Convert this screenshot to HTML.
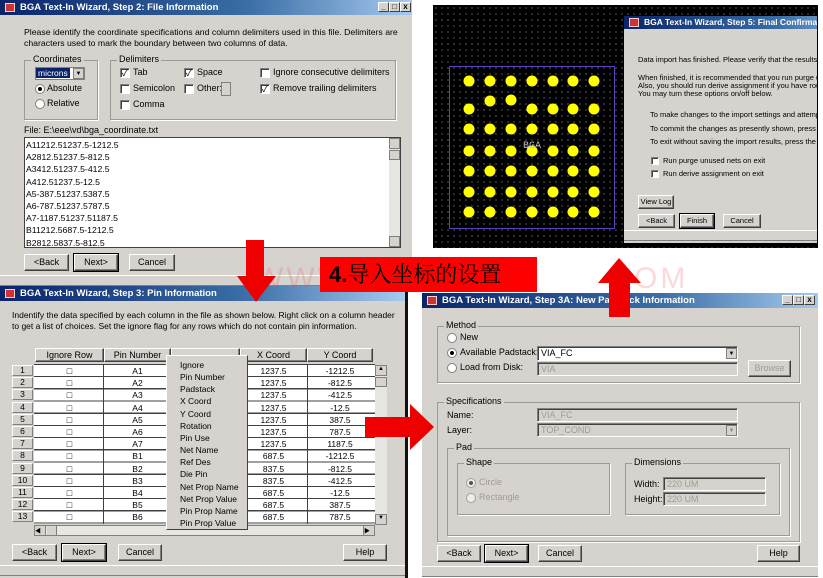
<!DOCTYPE html>
<html><head><meta charset="utf-8">
<style>
*{margin:0;padding:0;box-sizing:border-box}
body{width:823px;height:578px;position:relative;overflow:hidden;background:#fff;font-family:"Liberation Sans","Noto Sans CJK SC",sans-serif;font-size:9px;color:#000}
.a{position:absolute}
.dlg{position:absolute;background:#d6d3ce}
.tb{position:absolute;left:0;right:0;top:0;height:15px;background:linear-gradient(90deg,#0a246a,#3a6ea5 60%,#a6caf0);color:#fff;font-weight:bold;font-size:9.5px;line-height:15px;padding-left:20px;white-space:nowrap;overflow:hidden}
.tb i{position:absolute;left:5px;top:3px;width:10px;height:9px;background:#c33;border:1px solid #fcc}
.wb{position:absolute;top:2px;width:11px;height:10px;background:#d6d3ce;border:1px solid;border-color:#fff #404040 #404040 #fff;font-size:8px;color:#000;line-height:8px;text-align:center;font-weight:bold}
.btn{position:absolute;height:17px;background:#d6d3ce;border:1px solid;border-color:#fff #404040 #404040 #fff;box-shadow:inset -1px -1px #808080;text-align:center;line-height:15px;font-size:9px}
.btn.d{outline:1px solid #000}
.grp{position:absolute;border:1px solid #9c9a94;box-shadow:1px 1px #fff}
.grp>b{position:absolute;top:-7px;left:6px;background:#d6d3ce;font-weight:normal;padding:0 2px;font-size:9px}
.cb{position:absolute;width:10px;height:10px;background:#fff;border:1px solid;border-color:#808080 #fff #fff #808080;box-shadow:inset 1px 1px #404040;font-size:9px;line-height:8px;text-align:center}
.rd{position:absolute;width:10px;height:10px;border-radius:50%;background:#fff;border:1px solid #808080}
.rd.on::after{content:"";position:absolute;left:2px;top:2px;width:4px;height:4px;border-radius:50%;background:#000}
.fld{position:absolute;height:14px;border:1px solid;border-color:#808080 #fff #fff #808080;box-shadow:inset 1px 1px #404040;padding-left:3px;line-height:12px;font-size:9px;color:#a09c94;background:#d6d3ce}
.sb{position:absolute;height:11px;border-top:1px solid #fff;border-bottom:1px solid #808080}
.tbl div{position:absolute;text-align:center;height:12px;line-height:12px;font-size:9px}
</style></head><body>

<!-- Top-left dialog -->
<div class="dlg" style="left:0;top:0;width:412px;height:286px">
 <div class="tb"><i></i>BGA Text-In Wizard, Step 2: File Information</div>
 <div class="wb" style="left:378px">_</div><div class="wb" style="left:389px">□</div><div class="wb" style="left:400px">x</div>
 <div class="a" style="left:24px;top:27px;width:385px;line-height:11px;font-size:8.7px">Please identify the coordinate specifications and column delimiters used in this file. Delimiters are characters used to mark the boundary between two columns of data.</div>
 <div class="grp" style="left:24px;top:60px;width:74px;height:60px"><b>Coordinates</b></div>
 <div class="a" style="left:35px;top:67px;width:50px;height:13px;background:#fff;border:1px solid #808080"><span style="background:#0a246a;color:#fff;padding:0 2px;font-size:8.5px">microns</span></div>
 <div class="a" style="left:73px;top:68px;width:11px;height:11px;background:#d6d3ce;border:1px solid #808080;font-size:6px;text-align:center;line-height:10px">▼</div>
 <div class="rd on" style="left:35px;top:84px"></div><div class="a" style="left:47px;top:83px">Absolute</div>
 <div class="rd" style="left:35px;top:99px"></div><div class="a" style="left:47px;top:98px">Relative</div>
 <div class="grp" style="left:110px;top:60px;width:286px;height:60px"><b>Delimiters</b></div>
 <div class="cb" style="left:120px;top:68px">✓</div><div class="a" style="left:133px;top:67px">Tab</div>
 <div class="cb" style="left:184px;top:68px">✓</div><div class="a" style="left:197px;top:67px">Space</div>
 <div class="cb" style="left:260px;top:68px"></div><div class="a" style="left:273px;top:67px">Ignore consecutive delimiters</div>
 <div class="cb" style="left:120px;top:84px"></div><div class="a" style="left:133px;top:83px">Semicolon</div>
 <div class="cb" style="left:184px;top:84px"></div><div class="a" style="left:197px;top:83px">Other:</div>
 <div class="a" style="left:221px;top:82px;width:10px;height:14px;border:1px solid #808080;background:#d6d3ce"></div>
 <div class="cb" style="left:260px;top:84px">✓</div><div class="a" style="left:273px;top:83px">Remove trailing delimiters</div>
 <div class="cb" style="left:120px;top:100px"></div><div class="a" style="left:133px;top:99px">Comma</div>
 <div class="a" style="left:24px;top:125px">File: E:\eee\vd\bga_coordinate.txt</div>
 <div class="a" style="left:24px;top:137px;width:377px;height:111px;background:#fff;border:1px solid #404040;padding:1px 0 0 1px;line-height:12.2px;font-size:8.7px;overflow:hidden">A11212.51237.5-1212.5<br>A2812.51237.5-812.5<br>A3412.51237.5-412.5<br>A412.51237.5-12.5<br>A5-387.51237.5387.5<br>A6-787.51237.5787.5<br>A7-1187.51237.51187.5<br>B11212.5687.5-1212.5<br>B2812.5837.5-812.5</div>
 <div class="a" style="left:389px;top:138px;width:11px;height:109px;background:#e8e6e2"><div class="a" style="top:0;width:11px;height:11px;background:#d6d3ce;border:1px solid #808080"></div><div class="a" style="top:12px;width:11px;height:10px;background:#d6d3ce;border:1px solid #808080"></div><div class="a" style="bottom:0;width:11px;height:11px;background:#d6d3ce;border:1px solid #808080"></div></div>
 <div class="btn" style="left:24px;top:254px;width:45px">&lt;Back</div>
 <div class="btn d" style="left:74px;top:254px;width:44px">Next&gt;</div>
 <div class="btn" style="left:129px;top:254px;width:46px">Cancel</div>
 <div class="sb" style="left:0;top:275px;width:412px"></div>
</div>

<!-- Top-right PCB -->
<div class="a" style="left:433px;top:5px;width:385px;height:243px;background-color:#000;background-image:radial-gradient(#666 0.6px,transparent 0.9px);background-size:6px 6px"></div>
<svg class="a" style="left:0;top:0" width="823" height="578">
 <rect x="449.5" y="66.5" width="165" height="162" fill="none" stroke="#6040c0" stroke-width="1"/>
 <g fill="#ffff00">
 <circle cx="469" cy="81" r="5.5"/><circle cx="490" cy="81" r="5.5"/><circle cx="511" cy="81" r="5.5"/><circle cx="532" cy="81" r="5.5"/><circle cx="553" cy="81" r="5.5"/><circle cx="573" cy="81" r="5.5"/><circle cx="594" cy="81" r="5.5"/>
 <circle cx="469" cy="109" r="5.5"/><circle cx="490" cy="101" r="5.5"/><circle cx="511" cy="100" r="5.5"/><circle cx="532" cy="109" r="5.5"/><circle cx="553" cy="109" r="5.5"/><circle cx="573" cy="109" r="5.5"/><circle cx="594" cy="109" r="5.5"/>
 <circle cx="469" cy="129" r="5.5"/><circle cx="490" cy="129" r="5.5"/><circle cx="511" cy="129" r="5.5"/><circle cx="532" cy="129" r="5.5"/><circle cx="553" cy="129" r="5.5"/><circle cx="573" cy="129" r="5.5"/><circle cx="594" cy="129" r="5.5"/>
 <circle cx="469" cy="151" r="5.5"/><circle cx="490" cy="151" r="5.5"/><circle cx="511" cy="151" r="5.5"/><circle cx="532" cy="151" r="5.5"/><circle cx="553" cy="151" r="5.5"/><circle cx="573" cy="151" r="5.5"/><circle cx="594" cy="151" r="5.5"/>
 <circle cx="469" cy="171" r="5.5"/><circle cx="490" cy="171" r="5.5"/><circle cx="511" cy="171" r="5.5"/><circle cx="532" cy="171" r="5.5"/><circle cx="553" cy="171" r="5.5"/><circle cx="573" cy="171" r="5.5"/><circle cx="594" cy="171" r="5.5"/>
 <circle cx="469" cy="192" r="5.5"/><circle cx="490" cy="192" r="5.5"/><circle cx="511" cy="192" r="5.5"/><circle cx="532" cy="192" r="5.5"/><circle cx="553" cy="192" r="5.5"/><circle cx="573" cy="192" r="5.5"/><circle cx="594" cy="192" r="5.5"/>
 <circle cx="469" cy="212" r="5.5"/><circle cx="490" cy="212" r="5.5"/><circle cx="511" cy="212" r="5.5"/><circle cx="532" cy="212" r="5.5"/><circle cx="553" cy="212" r="5.5"/><circle cx="573" cy="212" r="5.5"/><circle cx="594" cy="212" r="5.5"/>
 </g>
 <text x="523" y="148" fill="#bbb" font-size="10" font-family="Liberation Mono,monospace">BGA</text>
</svg>

<!-- Final confirmation dialog -->
<div class="dlg" style="left:624px;top:16px;width:193px;height:227px;overflow:hidden">
 <div class="tb" style="height:13px;line-height:13px;font-size:8.5px;width:260px"><i style="top:2px"></i>BGA Text-In Wizard, Step 5: Final Confirmation</div>
 <div class="a" style="left:14px;top:40px;white-space:nowrap;font-size:7.5px;line-height:8.5px">Data import has finished. Please verify that the results are correct</div>
 <div class="a" style="left:14px;top:58px;white-space:nowrap;font-size:7.5px;line-height:8px">When finished, it is recommended that you run purge unused net<br>Also, you should run derive assignment if you have routed pins to<br>You may turn these options on/off below.</div>
 <div class="a" style="left:26px;top:92px;white-space:nowrap;font-size:7.5px;line-height:13.5px">To make changes to the import settings and attempt another<br>To commit the changes as presently shown, press the Finish<br>To exit without saving the import results, press the Cancel bu</div>
 <div class="cb" style="left:27px;top:141px;width:8px;height:8px"></div><div class="a" style="left:39px;top:140px;font-size:7.5px">Run purge unused nets on exit</div>
 <div class="cb" style="left:27px;top:154px;width:8px;height:8px"></div><div class="a" style="left:39px;top:153px;font-size:7.5px">Run derive assignment on exit</div>
 <div class="btn" style="left:14px;top:179px;width:36px;height:14px;line-height:12px;font-size:7.5px">View Log</div>
 <div class="btn" style="left:14px;top:198px;width:37px;height:14px;line-height:12px;font-size:7.5px">&lt;Back</div>
 <div class="btn d" style="left:56px;top:198px;width:34px;height:14px;line-height:12px;font-size:7.5px">Finish</div>
 <div class="btn" style="left:99px;top:198px;width:38px;height:14px;line-height:12px;font-size:7.5px">Cancel</div>
 <div class="sb" style="left:0;top:214px;width:193px"></div>
</div>

<!-- Bottom-left dialog -->
<div class="dlg" style="left:0;top:286px;width:405px;height:292px">
 <div class="tb"><i></i>BGA Text-In Wizard, Step 3: Pin Information</div>
 <div class="a" style="left:12px;top:24px;width:390px;line-height:11px;font-size:8.5px">Indentify the data specified by each column in the file as shown below. Right click on a column header to get a list of choices. Set the ignore flag for any rows which do not contain pin information.</div>
</div>
<div class="a" style="left:405px;top:286px;width:3px;height:292px;background:#111"></div>
<div class="a tbl" style="left:0;top:0">
 <div class="btn" style="left:35px;top:348px;width:69px;height:14px;line-height:12px">Ignore Row</div>
 <div class="btn" style="left:104px;top:348px;width:67px;height:14px;line-height:12px">Pin Number</div>
 <div class="btn" style="left:171px;top:348px;width:69px;height:14px;line-height:12px"></div>
 <div class="btn" style="left:240px;top:348px;width:67px;height:14px;line-height:12px">X Coord</div>
 <div class="btn" style="left:307px;top:348px;width:66px;height:14px;line-height:12px">Y Coord</div>
</div>
<div class="a" style="left:34px;top:364px;width:341px;height:160px;background:#fff;border-top:1px solid #404040;background-image:repeating-linear-gradient(180deg,transparent 0 11px,#404040 11px 12.2px),linear-gradient(90deg,transparent 69px,#404040 69px 70px,transparent 70px 136px,#404040 136px 137px,transparent 137px 205px,#404040 205px 206px,transparent 206px 273px,#404040 273px 274px,transparent 274px)"></div>
<div class="a" style="left:0;top:365px;width:380px;font-size:8.5px;line-height:12.2px">
 <div class="a" style="left:12px;top:0;width:21px;text-align:center">
  <div style="background:#d6d3ce;border:1px solid;border-color:#fff #808080 #808080 #fff;height:11px;line-height:9px;margin-bottom:1.2px">1</div><div style="background:#d6d3ce;border:1px solid;border-color:#fff #808080 #808080 #fff;height:11px;line-height:9px;margin-bottom:1.2px">2</div><div style="background:#d6d3ce;border:1px solid;border-color:#fff #808080 #808080 #fff;height:11px;line-height:9px;margin-bottom:1.2px">3</div><div style="background:#d6d3ce;border:1px solid;border-color:#fff #808080 #808080 #fff;height:11px;line-height:9px;margin-bottom:1.2px">4</div><div style="background:#d6d3ce;border:1px solid;border-color:#fff #808080 #808080 #fff;height:11px;line-height:9px;margin-bottom:1.2px">5</div><div style="background:#d6d3ce;border:1px solid;border-color:#fff #808080 #808080 #fff;height:11px;line-height:9px;margin-bottom:1.2px">6</div><div style="background:#d6d3ce;border:1px solid;border-color:#fff #808080 #808080 #fff;height:11px;line-height:9px;margin-bottom:1.2px">7</div><div style="background:#d6d3ce;border:1px solid;border-color:#fff #808080 #808080 #fff;height:11px;line-height:9px;margin-bottom:1.2px">8</div><div style="background:#d6d3ce;border:1px solid;border-color:#fff #808080 #808080 #fff;height:11px;line-height:9px;margin-bottom:1.2px">9</div><div style="background:#d6d3ce;border:1px solid;border-color:#fff #808080 #808080 #fff;height:11px;line-height:9px;margin-bottom:1.2px">10</div><div style="background:#d6d3ce;border:1px solid;border-color:#fff #808080 #808080 #fff;height:11px;line-height:9px;margin-bottom:1.2px">11</div><div style="background:#d6d3ce;border:1px solid;border-color:#fff #808080 #808080 #fff;height:11px;line-height:9px;margin-bottom:1.2px">12</div><div style="background:#d6d3ce;border:1px solid;border-color:#fff #808080 #808080 #fff;height:11px;line-height:9px">13</div>
 </div>
 <div class="a" style="left:35px;top:0;width:69px;text-align:center;font-size:9px">□<br>□<br>□<br>□<br>□<br>□<br>□<br>□<br>□<br>□<br>□<br>□<br>□</div>
 <div class="a" style="left:104px;top:0;width:67px;text-align:center">A1<br>A2<br>A3<br>A4<br>A5<br>A6<br>A7<br>B1<br>B2<br>B3<br>B4<br>B5<br>B6</div>
 <div class="a" style="left:240px;top:0;width:67px;text-align:center">1237.5<br>1237.5<br>1237.5<br>1237.5<br>1237.5<br>1237.5<br>1237.5<br>687.5<br>837.5<br>837.5<br>687.5<br>687.5<br>687.5</div>
 <div class="a" style="left:307px;top:0;width:66px;text-align:center">-1212.5<br>-812.5<br>-412.5<br>-12.5<br>387.5<br>787.5<br>1187.5<br>-1212.5<br>-812.5<br>-412.5<br>-12.5<br>387.5<br>787.5</div>
</div>
<div class="a" style="left:375px;top:365px;width:12px;height:160px;background:#e8e6e2"><div class="a" style="top:0;width:12px;height:11px;background:#d6d3ce;border:1px solid #808080;font-size:6px;text-align:center">▲</div><div class="a" style="top:12px;width:12px;height:10px;background:#d6d3ce;border:1px solid #808080"></div><div class="a" style="bottom:0;width:12px;height:11px;background:#d6d3ce;border:1px solid #808080;font-size:6px;text-align:center">▼</div></div>
<div class="a" style="left:34px;top:525px;width:341px;height:11px;background:#e8e6e2;border:1px solid #808080"><div class="a" style="left:0;width:11px;height:9px;background:#d6d3ce;border-right:1px solid #808080;font-size:6px">◀</div><div class="a" style="left:12px;width:10px;height:9px;background:#d6d3ce;border-right:1px solid #808080"></div><div class="a" style="right:0;width:11px;height:9px;background:#d6d3ce;border-left:1px solid #808080;font-size:6px">▶</div></div>
<div class="a" style="left:166px;top:355px;width:82px;height:175px;background:#d6d3ce;border:1px solid;border-color:#fff #404040 #404040 #fff;padding:3px 0 0 13px;font-size:8.5px;line-height:12.15px">Ignore<br>Pin Number<br>Padstack<br>X Coord<br>Y Coord<br>Rotation<br>Pin Use<br>Net Name<br>Ref Des<br>Die Pin<br>Net Prop Name<br>Net Prop Value<br>Pin Prop Name<br>Pin Prop Value</div>
<div class="btn" style="left:12px;top:544px;width:45px">&lt;Back</div>
<div class="btn d" style="left:62px;top:544px;width:44px">Next&gt;</div>
<div class="btn" style="left:118px;top:544px;width:44px">Cancel</div>
<div class="btn" style="left:343px;top:544px;width:44px">Help</div>
<div class="sb" style="left:0;top:565px;width:405px"></div>

<!-- Bottom-right dialog -->
<div class="dlg" style="left:422px;top:293px;width:396px;height:284px">
 <div class="tb"><i></i>BGA Text-In Wizard, Step 3A: New Padstack Information</div>
 <div class="wb" style="left:360px">_</div><div class="wb" style="left:371px">□</div><div class="wb" style="left:382px">x</div>
 <div class="grp" style="left:15px;top:33px;width:363px;height:57px"><b>Method</b></div>
 <div class="rd" style="left:25px;top:40px"></div><div class="a" style="left:38px;top:39px">New</div>
 <div class="rd on" style="left:25px;top:55px"></div><div class="a" style="left:38px;top:54px">Available Padstack:</div>
 <div class="a" style="left:115px;top:53px;width:201px;height:15px;background:#fff;border:1px solid;border-color:#808080 #fff #fff #808080;box-shadow:inset 1px 1px #404040;padding-left:3px;line-height:13px">VIA_FC</div>
 <div class="a" style="left:304px;top:55px;width:11px;height:11px;background:#d6d3ce;border:1px solid #808080;font-size:6px;text-align:center;line-height:10px">▼</div>
 <div class="rd" style="left:25px;top:70px"></div><div class="a" style="left:38px;top:69px">Load from Disk:</div>
 <div class="fld" style="left:115px;top:69px;width:201px">VIA</div>
 <div class="btn" style="left:326px;top:67px;width:43px;color:#a09c94">Browse</div>
 <div class="grp" style="left:15px;top:109px;width:363px;height:140px"><b>Specifications</b></div>
 <div class="a" style="left:25px;top:117px">Name:</div><div class="fld" style="left:115px;top:115px;width:201px">VIA_FC</div>
 <div class="a" style="left:25px;top:132px">Layer:</div><div class="fld" style="left:115px;top:130px;width:201px">TOP_COND</div>
 <div class="a" style="left:304px;top:132px;width:11px;height:11px;background:#d6d3ce;border:1px solid #808080;font-size:6px;text-align:center;line-height:10px;color:#888">▼</div>
 <div class="grp" style="left:25px;top:155px;width:343px;height:88px"><b>Pad</b></div>
 <div class="grp" style="left:35px;top:170px;width:153px;height:52px"><b>Shape</b></div>
 <div class="rd on" style="left:44px;top:185px;opacity:.6"></div><div class="a" style="left:57px;top:184px;color:#a09c94">Circle</div>
 <div class="rd" style="left:44px;top:200px;opacity:.6"></div><div class="a" style="left:57px;top:199px;color:#a09c94">Rectangle</div>
 <div class="grp" style="left:203px;top:170px;width:155px;height:52px"><b>Dimensions</b></div>
 <div class="a" style="left:212px;top:186px">Width:</div><div class="fld" style="left:241px;top:184px;width:103px">220 UM</div>
 <div class="a" style="left:212px;top:201px">Height:</div><div class="fld" style="left:241px;top:199px;width:103px">220 UM</div>
 <div class="btn" style="left:15px;top:252px;width:44px">&lt;Back</div>
 <div class="btn d" style="left:63px;top:252px;width:43px">Next&gt;</div>
 <div class="btn" style="left:116px;top:252px;width:44px">Cancel</div>
 <div class="btn" style="left:335px;top:252px;width:43px">Help</div>
 <div class="sb" style="left:0;top:273px;width:396px"></div>
</div>

<!-- watermark -->
<div class="a" style="left:255px;top:262px;font-size:30px;color:rgba(230,80,90,.22);letter-spacing:3px;white-space:nowrap">WWW.EDA<span style="margin-left:180px">COM</span></div>

<!-- Arrows -->
<svg class="a" style="left:0;top:0" width="823" height="578">
 <polygon points="246,240 264,240 264,276 276,276 256,302 237,276 246,276" fill="#ee0000"/>
 <polygon points="619,258 641,283 630,283 630,317 609,317 609,283 598,283" fill="#ee0000"/>
 <polygon points="365,417 410,417 410,404 434,427 410,450 410,437 365,437" fill="#ee0000"/>
</svg>
<div class="a" style="left:320px;top:257px;width:217px;height:35px;background:#ff0000;font-size:22px;line-height:35px;padding-left:9px;font-family:'Liberation Sans','Noto Serif CJK SC',serif;white-space:nowrap"><b>4.</b>导入坐标的设置</div>
</body></html>
